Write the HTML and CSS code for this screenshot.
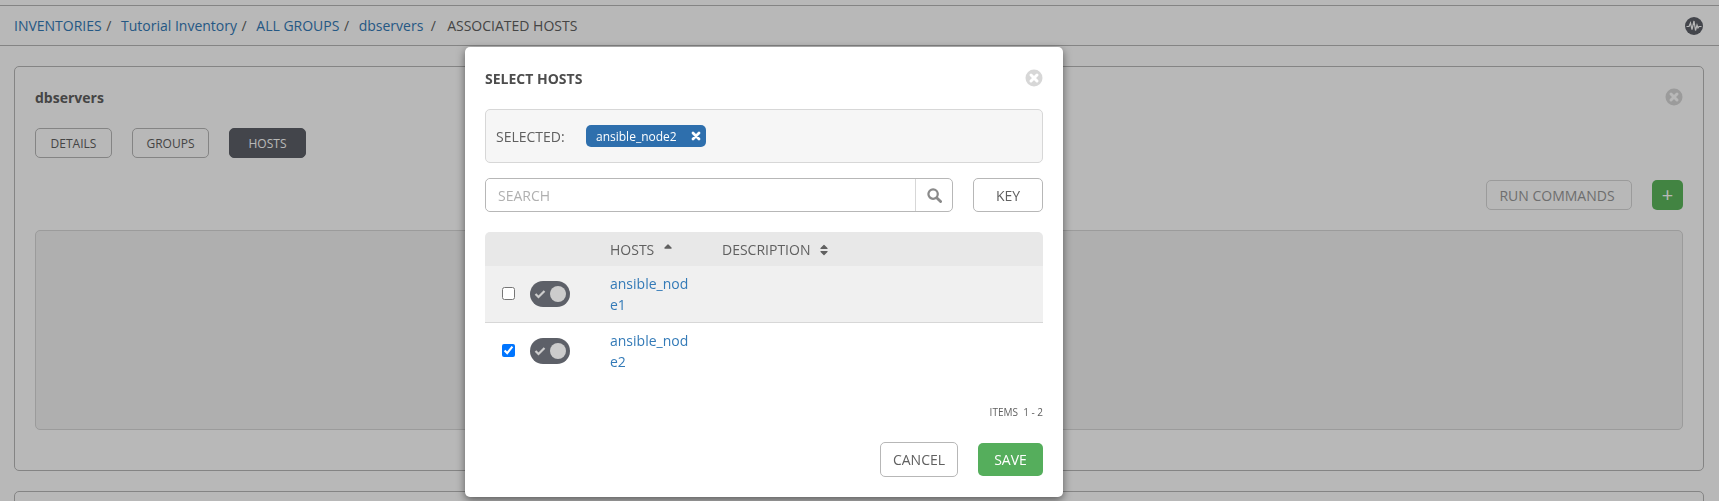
FILE: index.html
```html
<!DOCTYPE html>
<html>
<head>
	<meta charset="UTF-8">
	<title>Associated Hosts</title>
	<link rel="stylesheet" href="styles.css">
</head>
<body>
	<div class="topStrip"></div>

	<div class="breadcrumbBar">
		<div class="breadcrumbs">
			<a href="#">INVENTORIES</a><span class="sep">/</span>
			<a href="#">Tutorial Inventory</a><span class="sep">/</span>
			<a href="#">ALL GROUPS</a><span class="sep">/</span>
			<a href="#">dbservers</a><span class="sep sepWide">/</span>
			<span class="current">ASSOCIATED HOSTS</span>
		</div>
		<svg class="activityIcon" viewBox="0 0 18 18">
			<circle cx="9" cy="9" r="9" fill="#5d6068"/>
			<path d="M1.500 9.500H4L5.500 6 7 12.500 9 4l1.500 9.500L12 8l1 3 1-1.500h2.500" fill="none" stroke="#fff" stroke-width="1.200"/>
		</svg>
	</div>

	<div class="content">
		<div class="panel">
			<div class="panelHead">
				<span class="panelTitle">dbservers</span>
				<svg class="closeIcon" viewBox="0 0 18 18">
					<circle cx="9" cy="9" r="8.500" fill="#d7d7d7"/>
					<path d="M6 6l6 6M12 6l-6 6" stroke="#fff" stroke-width="3" stroke-linecap="round"/>
				</svg>
			</div>
			<div class="tabs">
				<button class="tab">DETAILS</button>
				<button class="tab">GROUPS</button>
				<button class="tab tabActive">HOSTS</button>
			</div>
			<div class="actions">
				<button class="btnRun">RUN COMMANDS</button>
				<button class="btnAdd">+</button>
			</div>
			<div class="emptyBox"></div>
		</div>
		<div class="panel"></div>
	</div>

	<div class="overlay"></div>

	<div class="modal">
		<div class="modalHead">
			<span class="modalTitle">SELECT HOSTS</span>
			<svg class="closeIcon" viewBox="0 0 18 18">
				<circle cx="9" cy="9" r="8.500" fill="#d7d7d7"/>
				<path d="M6 6l6 6M12 6l-6 6" stroke="#fff" stroke-width="3" stroke-linecap="round"/>
			</svg>
		</div>

		<div class="selectedBox">
			<span class="selectedLabel">SELECTED:</span>
			<span class="tag">ansible_node2
				<svg class="tagX" viewBox="0 0 10 10">
					<path d="M2 2l6 6M8 2l-6 6" stroke="#fff" stroke-width="2.800" stroke-linecap="round"/>
				</svg>
			</span>
		</div>

		<div class="searchRow">
			<div class="searchBox">
				<input class="searchInput" type="text" placeholder="SEARCH">
				<span class="searchBtn">
					<svg class="searchIcon" viewBox="0 0 16 16">
						<circle cx="6.500" cy="6.500" r="5" fill="none" stroke="#8a8a8a" stroke-width="2.400"/>
						<path d="M10.300 10.300l4.200 4.200" stroke="#8a8a8a" stroke-width="3" stroke-linecap="round"/>
					</svg>
				</span>
			</div>
			<button class="btnKey">KEY</button>
		</div>

		<div class="hostTable">
			<div class="hostHead">
				<span class="colHosts">HOSTS
					<svg class="sortIcon sortUp" viewBox="0 0 10 14"><path d="M2 6l3-3 3 3z" fill="#606060" stroke="#606060" stroke-width="1.400" stroke-linejoin="round"/></svg>
				</span>
				<span>DESCRIPTION
					<svg class="sortIcon" viewBox="0 0 10 14"><path d="M2 5.500l3-3 3 3zM2 8.500l3 3 3-3z" fill="#606060" stroke="#606060" stroke-width="1.200" stroke-linejoin="round"/></svg>
				</span>
			</div>
			<div class="hostRow hostRowOdd">
				<input class="rowCheck" type="checkbox">
				<span class="toggle">
					<svg class="toggleCheck" viewBox="0 0 12 10"><path d="M1.500 5l3 3 6-6" fill="none" stroke="#ccc" stroke-width="2.200"/></svg>
					<span class="toggleKnob"></span>
				</span>
				<a class="hostName" href="#">ansible_node1</a>
			</div>
			<div class="hostRow">
				<input class="rowCheck" type="checkbox" checked>
				<span class="toggle">
					<svg class="toggleCheck" viewBox="0 0 12 10"><path d="M1.500 5l3 3 6-6" fill="none" stroke="#ccc" stroke-width="2.200"/></svg>
					<span class="toggleKnob"></span>
				</span>
				<a class="hostName" href="#">ansible_node2</a>
			</div>
		</div>

		<div class="itemCount">ITEMS &nbsp;1 - 2</div>

		<div class="modalFoot">
			<button class="btnCancel">CANCEL</button>
			<button class="btnSave">SAVE</button>
		</div>
	</div>
</body>
</html>
```

FILE: styles.css
```css
html, body {
	margin: 0;
	height: 501px;
	overflow: hidden;
}

body {
	background-color: #fff;
	color: #606060;
	font-family: "Open Sans", sans-serif;
	font-size: 14px;
}

a {
	color: #337ab7;
	text-decoration: none;
}

button {
	font-family: "Open Sans", sans-serif;
	cursor: pointer;
}

.topStrip {
	height: 5px;
	border-bottom: 1px solid #b7b7b7;
}

.breadcrumbBar {
	height: 39px;
	padding: 0 16px 0 14px;
	border-bottom: 1px solid #b7b7b7;
	display: flex;
	align-items: center;
	justify-content: space-between;
}

.sep {
	margin: 0 6px 0 4.500px;
	color: #606060;
}

.sepWide {
	margin: 0 7.500px 0 7.500px;
}

.current {
	color: #606060;
}

.activityIcon {
	width: 18px;
	height: 18px;
}

.content {
	height: 455px;
	box-sizing: border-box;
	overflow: hidden;
	padding: 20px 15px 0 14px;
}

.panel {
	border: 1px solid #b7b7b7;
	border-radius: 5px;
	padding: 20px;
	margin-bottom: 20px;
	height: 363px;
}

.panelHead {
	display: flex;
	align-items: center;
	justify-content: space-between;
	height: 20px;
}

.panelTitle {
	font-weight: bold;
	color: #606060;
}

.closeIcon {
	width: 18px;
	height: 18px;
}

.tabs {
	display: flex;
	gap: 20px;
	margin-top: 21px;
}

.tab {
	width: 77px;
	height: 30px;
	padding: 0;
	background-color: #fff;
	border: 1px solid #b7b7b7;
	border-radius: 5px;
	color: #606060;
	font-size: 12px;
}

.tabActive {
	background-color: #5d6068;
	border-color: #5d6068;
	color: #fff;
}

.actions {
	display: flex;
	justify-content: flex-end;
	gap: 20px;
	margin-top: 22px;
}

.btnRun {
	width: 146px;
	height: 30px;
	padding: 0 4px 0 0;
	background-color: #fff;
	border: 1px solid #d7d7d7;
	border-radius: 5px;
	color: #999;
	font-size: 14px;
}

.btnAdd {
	width: 31px;
	height: 30px;
	padding: 0;
	background-color: #5cb85c;
	border: none;
	border-radius: 5px;
	color: #fff;
	font-size: 20px;
	line-height: 30px;
}

.emptyBox {
	height: 200px;
	margin-top: 20px;
	background-color: #f3f3f3;
	border: 1px solid #d7d7d7;
	border-radius: 5px;
	box-sizing: border-box;
}

.overlay {
	position: fixed;
	top: 0;
	left: 0;
	right: 0;
	bottom: 0;
	background-color: rgba(0, 0, 0, 0.28);
}

.modal {
	position: absolute;
	top: 47px;
	left: 465px;
	width: 598px;
	height: 450px;
	box-sizing: border-box;
	padding: 0 20px;
	background-color: #fff;
	border-radius: 5px;
	box-shadow: 0 3px 9px rgba(0, 0, 0, 0.5);
}

.modalHead {
	display: flex;
	align-items: center;
	justify-content: space-between;
	height: 62px;
}

.modalTitle {
	font-weight: bold;
	color: #4d4d4d;
}

.selectedBox {
	height: 54px;
	box-sizing: border-box;
	display: flex;
	align-items: center;
	padding-left: 10px;
	background-color: #f6f6f6;
	border: 1px solid #d7d7d7;
	border-radius: 5px;
}

.selectedLabel {
	color: #606060;
	width: 90px;
}

.tag {
	display: flex;
	align-items: center;
	justify-content: space-between;
	width: 120px;
	height: 22px;
	box-sizing: border-box;
	padding: 0 5px 0 10px;
	background-color: #2e6fad;
	border-radius: 5px;
	color: #fff;
	font-size: 12px;
}

.tagX {
	width: 10px;
	height: 10px;
}

.searchRow {
	display: flex;
	justify-content: space-between;
	margin-top: 15px;
}

.searchBox {
	display: flex;
	width: 468px;
	height: 34px;
	box-sizing: border-box;
	border: 1px solid #b7b7b7;
	border-radius: 5px;
}

.searchInput {
	flex: 1;
	min-width: 0;
	padding: 0 12px;
	border: none;
	border-radius: 5px;
	outline: none;
	color: #606060;
	font-family: "Open Sans", sans-serif;
	font-size: 14px;
}

.searchInput::placeholder {
	color: #b0b0b0;
}

.searchBtn {
	width: 36px;
	display: flex;
	align-items: center;
	justify-content: center;
	border-left: 1px solid #d7d7d7;
}

.searchIcon {
	width: 15px;
	height: 15px;
}

.btnKey {
	width: 70px;
	height: 34px;
	padding: 0;
	background-color: #fff;
	border: 1px solid #b7b7b7;
	border-radius: 5px;
	color: #606060;
	font-size: 14px;
}

.hostTable {
	margin-top: 20px;
}

.hostHead {
	height: 34px;
	display: flex;
	align-items: center;
	padding-left: 125px;
	background-color: #e8e8e8;
	border-radius: 5px 5px 0 0;
	color: #606060;
}

.colHosts {
	width: 112px;
}

.sortIcon {
	width: 10px;
	height: 14px;
	margin-left: 5px;
	vertical-align: -2px;
}

.sortUp {
	vertical-align: -1px;
}

.hostRow {
	height: 56px;
	display: flex;
	align-items: center;
	padding-left: 17px;
	border-bottom: 1px solid transparent;
}

.hostRowOdd {
	background-color: #f0f0f0;
	border-bottom: 1px solid #d7d7d7;
}

.rowCheck {
	width: 13px;
	height: 13px;
	margin: -2px 15px 0 0;
}

.toggle {
	display: flex;
	align-items: center;
	width: 40px;
	height: 26px;
	background-color: #5d6068;
	border-radius: 13px;
}

.toggleCheck {
	width: 12px;
	height: 10px;
	margin-left: 4px;
}

.toggleKnob {
	width: 16px;
	height: 16px;
	margin-left: 4px;
	background-color: #ccc;
	border-radius: 50%;
}

.hostName {
	width: 80px;
	margin-left: 40px;
	line-height: 21px;
	word-break: break-all;
}

.itemCount {
	margin-top: 25px;
	text-align: right;
	font-size: 10px;
	line-height: 14px;
	color: #606060;
}

.modalFoot {
	display: flex;
	justify-content: flex-end;
	align-items: center;
	gap: 20px;
	margin-top: 23px;
}

.btnCancel {
	width: 78px;
	height: 35px;
	padding: 0;
	background-color: #fff;
	border: 1px solid #b7b7b7;
	border-radius: 5px;
	color: #606060;
	font-size: 14px;
}

.btnSave {
	width: 65px;
	height: 33px;
	padding: 0;
	background-color: #55ae5c;
	border: none;
	border-radius: 5px;
	color: #fff;
	font-size: 14px;
}
```
